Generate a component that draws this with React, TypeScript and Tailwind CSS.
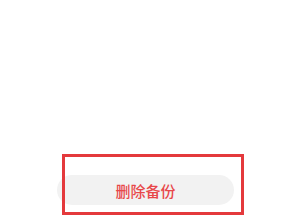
import React from "react";

const App = () => {
  return (
    <div
      className="relative w-[307px] h-[219px] bg-white overflow-hidden"
      style={{ fontFamily: '"Noto Sans CJK SC", "Noto Sans", sans-serif' }}
    >
      <div className="flex flex-col pt-[175px] pl-[57px]">
        <button className="w-[177px] h-[30px] rounded-full bg-[#f2f2f2] flex items-center justify-center text-[15px] font-medium leading-none text-[#e8474a]">
          删除备份
        </button>
      </div>

      {/* annotation frame */}
      <div className="absolute left-[62px] top-[154px] w-[182px] h-[61px] border-[3px] border-[#e4393c] pointer-events-none" />
    </div>
  );
};

export default App;
